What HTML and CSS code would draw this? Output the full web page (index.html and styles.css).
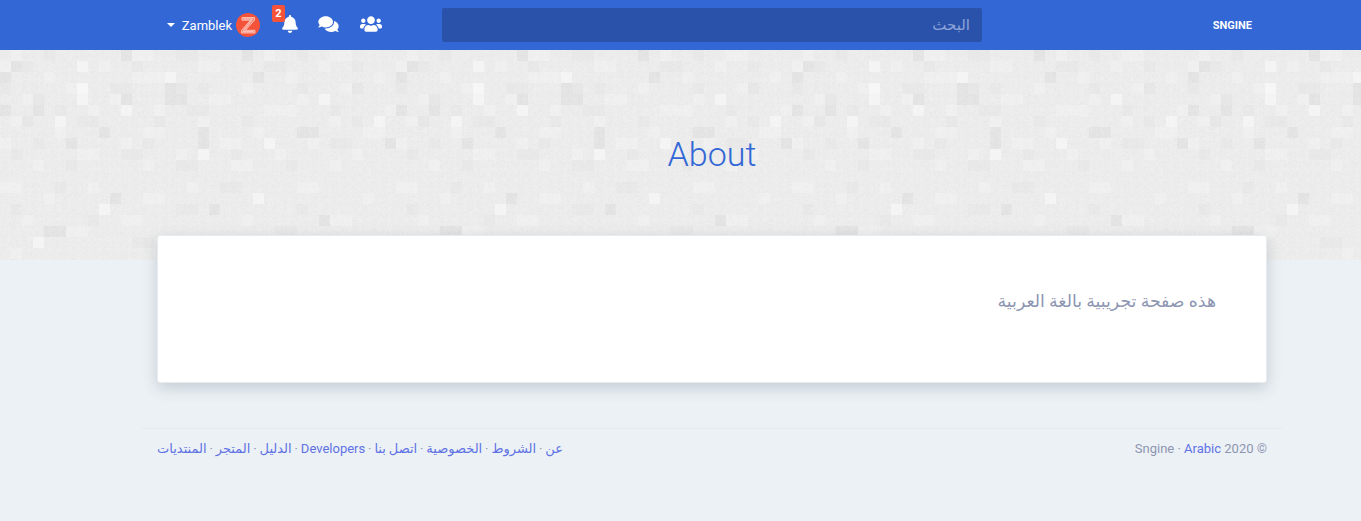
FILE: index.html
```html
<!DOCTYPE html>
<html lang="ar">
<head>
    <meta charset="UTF-8">
    <meta name="viewport" content="width=device-width, initial-scale=1.0">
    <title>About</title>
    <link rel="stylesheet" href="styles.css">
</head>
<body>
<div class="page" dir="rtl">
    <header class="navbar">
        <div class="nav-inner">
            <a class="brand" href="#">SNGINE</a>
            <div class="search"><span class="search-text">البحث</span></div>
            <div class="nav-icons" dir="ltr">
                <a class="user" href="#">
                    <span class="caret"></span>
                    <span class="user-name">Zamblek</span>
                    <svg class="avatar" viewBox="0 0 24 24">
                        <circle cx="12" cy="12" r="12" fill="#f4533a"/>
                        <path d="M6 4.500h12.500v2.700L9.500 17.300h9.500v2.700H5.500v-2.700L14.500 7.200H6z" fill="#f9897a" stroke="#ffd0c5" stroke-width=".8"/>
                        <path d="M7.500 5.900h9L7 18.600h10.500" fill="none" stroke="#ffe0d9" stroke-width=".7"/>
                    </svg>
                </a>
                <a class="nav-icon bell" href="#">
                    <span class="badge">2</span>
                    <svg viewBox="0 0 448 512" width="16" height="18"><path fill="#fff" d="M224 512c35.300 0 64-28.700 64-64H160c0 35.300 28.700 64 64 64zm215.400-149.700c-19.300-20.800-55.500-52-55.500-154.300 0-77.700-54.500-139.900-127.900-155.200V32c0-17.700-14.300-32-32-32s-32 14.300-32 32v20.800C118.600 68.100 64.100 130.300 64.100 208c0 102.300-36.200 133.500-55.500 154.300-6 6.500-8.700 14.200-8.600 21.700.1 16.400 13 32 32.100 32h383.800c19.100 0 32-15.600 32.100-32 .1-7.500-2.600-15.300-8.600-21.700z"/></svg>
                </a>
                <a class="nav-icon" href="#">
                    <svg viewBox="0 0 576 512" width="21" height="18"><path fill="#fff" d="M416 192c0-88.400-93.100-160-208-160S0 103.600 0 192c0 34.300 14.100 65.900 38 92-13.400 30.200-35.500 54.200-35.800 54.500-2.200 2.300-2.800 5.700-1.500 8.700S4.800 352 8 352c36.600 0 66.900-12.300 88.700-25 32.200 15.700 70.300 25 111.300 25 114.900 0 208-71.600 208-160zm122 220c23.900-26 38-57.700 38-92 0-66.900-53.500-124.200-129.300-148.100.9 6.600 1.300 13.300 1.300 20.100 0 105.900-107.700 192-240 192-10.800 0-21.300-.8-31.700-1.900C207.800 439.600 281.800 480 368 480c41 0 79.100-9.200 111.300-25 21.800 12.700 52.100 25 88.700 25 3.200 0 6.100-1.900 7.300-4.800 1.300-2.900.7-6.300-1.500-8.700-.3-.3-22.400-24.200-35.800-54.500z"/></svg>
                </a>
                <a class="nav-icon" href="#">
                    <svg viewBox="0 0 640 512" width="22" height="18"><path fill="#fff" d="M96 224c35.300 0 64-28.700 64-64s-28.700-64-64-64-64 28.700-64 64 28.700 64 64 64zm448 0c35.300 0 64-28.700 64-64s-28.700-64-64-64-64 28.700-64 64 28.700 64 64 64zm32 32h-64c-17.600 0-33.500 7.100-45.100 18.600 40.300 22.100 68.900 62 75.100 109.400h66c17.700 0 32-14.300 32-32v-32c0-35.300-28.700-64-64-64zm-256 0c61.900 0 112-50.100 112-112S381.900 32 320 32 208 82.100 208 144s50.100 112 112 112zm76.800 32h-8.300c-20.800 10-43.900 16-68.500 16s-47.600-6-68.500-16h-8.300C179.600 288 128 339.600 128 403.200V432c0 26.500 21.500 48 48 48h288c26.500 0 48-21.500 48-48v-28.800c0-63.600-51.600-115.200-115.200-115.200zm-223.700-13.400C161.500 263.100 145.600 256 128 256H64c-35.300 0-64 28.700-64 64v32c0 17.700 14.300 32 32 32h65.900c6.300-47.400 34.900-87.300 75.200-109.400z"/></svg>
                </a>
            </div>
        </div>
    </header>

    <section class="page-header">
        <h1 dir="ltr">About</h1>
    </section>

    <main class="container">
        <div class="card">
            <p>هذه صفحة تجريبية بالغة العربية</p>
        </div>

        <footer class="footer">
            <div class="copyright"><span>© 2020</span> <span dir="ltr"><span>Sngine ·</span> <a href="#">Arabic</a></span></div>
            <div class="footer-links">
                <a href="#">عن</a> · <a href="#">الشروط</a> · <a href="#">الخصوصية</a> · <a href="#">اتصل بنا</a> · <a href="#">Developers</a> · <a href="#">الدليل</a> · <a href="#">المتجر</a> · <a href="#">المنتديات</a>
            </div>
        </footer>
    </main>
</div>
</body>
</html>
```

FILE: styles.css
```css
* { box-sizing: border-box; }
html, body { overflow: hidden; }
body { margin: 0; min-height: 521px; background-color: #ecf1f5; font-family: 'Roboto', 'Noto Sans', 'DejaVu Sans', sans-serif; font-size: 13px; color: #8d96b2; }
a { color: #5e72e4; text-decoration: none; }

/* the page is laid out wider than the window */
.page { width: 1424px; }

.navbar { height: 50px; background-color: #3367d6; }
.nav-inner { width: 1140px; height: 50px; margin: 0 auto; display: flex; align-items: center; }
.brand { width: 300px; padding-right: 30px; color: #fff; font-size: 11px; font-weight: 700; white-space: nowrap; }
.search { width: 540px; height: 34px; background-color: #2a52ab; border-radius: 2px; padding: 0 12px; display: flex; align-items: center; }
.search-text { color: #8ba3d8; font-size: 15px; }
.nav-icons { display: flex; align-items: center; margin-right: 60px; }
.user { display: flex; align-items: center; color: #fff; }
.caret { width: 0; height: 0; border: 4px solid transparent; border-top-color: #fff; border-bottom: 0; margin-right: 7px; }
.user-name { font-size: 13px; margin-right: 4px; }
.avatar { width: 24px; height: 24px; }
.nav-icon { display: block; position: relative; margin-left: 21px; margin-bottom: 3px; line-height: 0; }
.bell { margin-left: 22px; }
.nav-icon.bell + .nav-icon { margin-left: 20px; }
.badge { position: absolute; left: -10px; top: -10px; width: 13px; height: 17px; background-color: #f4533a; border-radius: 2px; color: #fff; font-size: 11px; font-weight: 700; line-height: 17px; text-align: center; }

.page-header { height: 210px; padding-top: 83px; text-align: center; background-color: #efefef; background-image: url("data:image/svg+xml,%3Csvg xmlns='http://www.w3.org/2000/svg' width='396' height='220'%3E%3Cfilter id='n'%3E%3CfeTurbulence baseFrequency='.9' numOctaves='2'/%3E%3CfeColorMatrix values='0 0 0 0 0 0 0 0 0 0 0 0 0 0 0 0 0 0 .05 0'/%3E%3C/filter%3E%3Crect width='396' height='220' filter='url(%23n)'/%3E%3Cg fill='none' stroke-width='11'%3E%3Cpath stroke='%23fff' stroke-opacity='.18' d='M11 5.500h11M132 5.500h22M264 5.500h11M330 5.500h22M0 16.500h11M99 16.500h11M198 16.500h22M319 16.500h11M44 27.500h11M132 27.500h33M286 27.500h11M374 27.500h11M66 38.500h22M176 38.500h11M242 38.500h11M341 38.500h22M22 49.500h22M110 49.500h11M209 49.500h22M297 49.500h11M88 60.500h11M154 60.500h11M264 60.500h33M385 60.500h11M11 71.500h22M198 71.500h11M330 71.500h11M55 82.500h11M143 82.500h22M253 82.500h11M363 82.500h22M0 93.500h11M121 93.500h11M220 93.500h22M308 93.500h11M77 104.500h22M176 104.500h11M275 104.500h11M352 104.500h11M33 115.500h11M143 115.500h11M231 115.500h22M330 115.500h11M0 137.500h22M88 137.500h11M187 137.500h11M297 137.500h22M44 148.500h11M143 148.500h22M363 148.500h11M22 170.500h11M121 170.500h22M242 170.500h11M330 170.500h22M66 181.500h22M209 192.500h11M286 192.500h11M11 203.500h11M154 203.500h11M374 203.500h11'/%3E%3Cpath stroke='%23fff' stroke-opacity='.45' d='M77 16.500h11M77 38.500h11M77 49.500h11M121 60.500h11M55 71.500h11M165 27.500h11M264 93.500h11M319 49.500h11M198 104.500h11M374 71.500h11M99 159.500h11M253 148.500h11M33 192.500h11M341 203.500h11'/%3E%3Cpath stroke='%23000' stroke-opacity='.015' d='M44 5.500h11M176 5.500h22M297 5.500h11M22 16.500h11M132 16.500h11M264 16.500h22M352 16.500h11M0 38.500h11M110 38.500h22M198 38.500h11M297 38.500h11M55 60.500h11M187 60.500h22M330 60.500h11M77 71.500h22M154 71.500h11M242 71.500h11M352 71.500h11M33 93.500h11M143 93.500h11M330 93.500h22M11 104.500h11M121 104.500h22M231 104.500h11M66 115.500h11M176 115.500h22M286 115.500h11M55 137.500h11M220 137.500h22M11 159.500h11M176 159.500h22M297 159.500h11M88 170.500h11M275 181.500h22M132 192.500h22M231 203.500h22'/%3E%3Cpath stroke='%23000' stroke-opacity='.035' d='M11 16.500h11M121 5.500h11M0 27.500h11M33 49.500h11M33 60.500h11M121 49.500h11M0 60.500h11M22 71.500h11M99 82.500h11M66 93.500h11M165 38.500h22M165 49.500h22M198 82.500h11M198 93.500h11M253 27.500h11M297 82.500h22M352 38.500h11M385 93.500h11M242 5.500h11M110 148.500h11M209 159.500h11M319 170.500h11M44 181.500h22M176 192.500h11M352 192.500h11'/%3E%3C/g%3E%3C/svg%3E"); }
.page-header h1 { margin: 0; font-size: 34px; font-weight: 300; line-height: 42px; color: #3367d6; }

.container { width: 1140px; margin: -25px auto 0; padding: 0 15px; position: relative; }
.card { height: 148px; background: #fff; border-radius: 3px; border: 1px solid #e8ecf1; box-shadow: 0 5px 15px rgba(40,60,80,0.2); padding: 54px 50px 0; }
.card p { margin: 0; font-size: 17.300px; line-height: 22px; color: #8d96b2; }

.footer { margin: 45px -15px 0; padding: 12px 15px 0; border-top: 1px solid #e5eaf0; display: flex; justify-content: space-between; line-height: 16px; font-size: 13px; }
.footer-links { word-spacing: -0.33px; }
```
